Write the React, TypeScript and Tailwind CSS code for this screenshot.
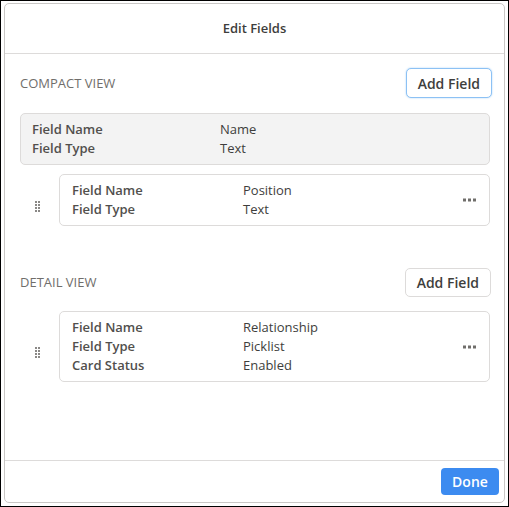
import type {ReactNode} from 'react';

type Row = {label: string; value: string};

const compactRows: Row[] = [
	{label: 'Field Name', value: 'Position'},
	{label: 'Field Type', value: 'Text'},
];

const detailRows: Row[] = [
	{label: 'Field Name', value: 'Relationship'},
	{label: 'Field Type', value: 'Picklist'},
	{label: 'Card Status', value: 'Enabled'},
];

function DragHandle() {
	const dots = [];
	for (let r = 0; r < 4; r++) {
		for (let c = 0; c < 2; c++) {
			dots.push(<rect key={`${r}-${c}`} x={c * 3} y={r * 3} width="2" height="2" fill="#8a8886" />);
		}
	}
	return (
		<svg width="5" height="11" viewBox="0 0 5 11" className="mt-[12px]">
			{dots}
		</svg>
	);
}

function MoreDots() {
	return (
		<svg width="14" height="4" viewBox="0 0 14 4">
			<rect x="0" y="0.5" width="3" height="3" fill="#706e6b" />
			<rect x="5" y="0.5" width="3" height="3" fill="#706e6b" />
			<rect x="10" y="0.5" width="3" height="3" fill="#706e6b" />
		</svg>
	);
}

function FieldRows({rows, labelWidth}: {rows: Row[]; labelWidth: string}) {
	return (
		<div className="flex flex-col">
			{rows.map((r) => (
				<div key={r.label} className="flex h-[19px] items-center">
					<span className={`${labelWidth} shrink-0 font-semibold text-[#514f4d]`}>{r.label}</span>
					<span className="text-[#3e3e3c]">{r.value}</span>
				</div>
			))}
		</div>
	);
}

function SectionHeader({title, focused}: {title: string; focused?: boolean}) {
	return (
		<div className="flex h-[30px] items-center justify-between">
			<span className="pt-[2px] text-[13px] uppercase text-[#706e6b]">{title}</span>
			<button
				className={
					focused
						? 'mr-[-2px] h-[30px] rounded-[5px] border border-[#8cc1f4] bg-white px-[11px] text-[14px] font-semibold text-[#3e3e3c] shadow-[0_0_2px_#a9d1f7]'
						: 'mr-[-1px] h-[29px] rounded-[5px] border border-[#dddbda] bg-white px-[11px] text-[14px] font-semibold text-[#3e3e3c]'
				}
			>
				Add Field
			</button>
		</div>
	);
}

function DraggableCard({children}: {children: ReactNode}) {
	return (
		<div className="flex items-center">
			<div className="flex w-[39px] shrink-0 justify-center pr-[4px]">
				<DragHandle />
			</div>
			<div className="flex flex-1 items-center justify-between rounded-[5px] border border-[#dddbda] bg-white pl-[12px] pr-[12px] pt-[6px] pb-[6px]">
				{children}
				<MoreDots />
			</div>
		</div>
	);
}

export default function App() {
	return (
		<div
			className="flex h-[507px] w-[509px] border border-black bg-white pt-[2px] pb-[3px] pl-[3px] pr-[3px] text-[13px]"
			style={{fontFamily: '"Open Sans", "Liberation Sans", sans-serif'}}
		>
			<div className="flex flex-1 flex-col rounded-[5px] border border-[#c9c7c5] bg-white">
				<div className="flex h-[50px] shrink-0 items-center justify-center border-b border-[#dddbda]">
					<span className="text-[13px] font-semibold text-[#3e3e3c]">Edit Fields</span>
				</div>

				<div className="flex flex-1 flex-col pl-[15px] pr-[14px] pt-[14px]">
					<SectionHeader title="Compact View" focused />

					<div className="mt-[15px] rounded-[5px] border border-[#dddbda] bg-[#f3f3f3] pl-[11px] pt-[6px] pb-[6px]">
						<FieldRows
							rows={[
								{label: 'Field Name', value: 'Name'},
								{label: 'Field Type', value: 'Text'},
							]}
							labelWidth="w-[188px]"
						/>
					</div>

					<div className="mt-[9px]">
						<DraggableCard>
							<div className="flex-1">
								<FieldRows rows={compactRows} labelWidth="w-[171px]" />
							</div>
						</DraggableCard>
					</div>

					<div className="mt-[41px]">
						<SectionHeader title="Detail View" />
					</div>

					<div className="mt-[14px]">
						<DraggableCard>
							<div className="flex-1">
								<FieldRows rows={detailRows} labelWidth="w-[171px]" />
							</div>
						</DraggableCard>
					</div>
				</div>

				<div className="flex h-[42px] shrink-0 items-center justify-end border-t border-[#dddbda] pr-[5px]">
					<button className="h-[27px] w-[58px] rounded-[4px] bg-[#3c8bf0] text-[14px] font-semibold text-white">
						Done
					</button>
				</div>
			</div>
		</div>
	);
}
